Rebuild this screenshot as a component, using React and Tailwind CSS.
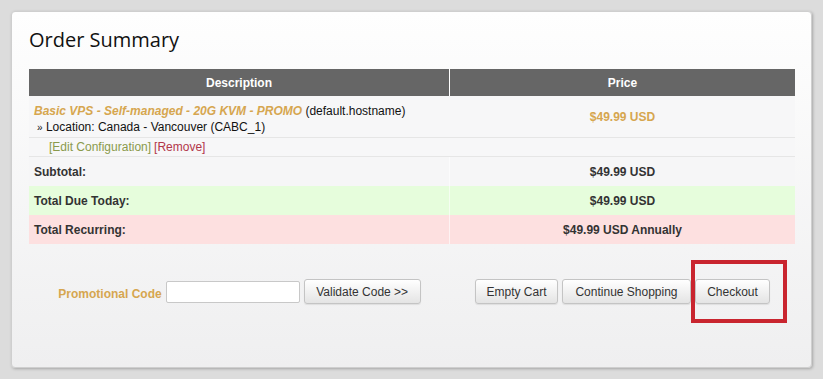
import React from "react";

const btn =
  "h-[25px] px-[8px] whitespace-nowrap rounded-[3px] border border-[#c4c4c4] bg-gradient-to-b from-white to-[#e4e4e4] text-[12px] text-[#333] shadow-[0_1px_1px_rgba(0,0,0,0.08)]";

const totals = [
  { label: "Subtotal:", value: "$49.99 USD", bg: "bg-[#f6f6f7]" },
  { label: "Total Due Today:", value: "$49.99 USD", bg: "bg-[#e6fddc]" },
  { label: "Total Recurring:", value: "$49.99 USD Annually", bg: "bg-[#fde0e0]" },
];

export default function App() {
  return (
    <div className="w-[823px] h-[379px] bg-[#dcdcdc] pt-[11px] pl-[11px] font-['Liberation_Sans',Arial,sans-serif]">
      <div className="relative w-[801px] h-[357px] rounded-[4px] border border-[#cfcfcf] bg-gradient-to-b from-[#fefefe] to-[#efeff0] shadow-[1px_1px_3px_rgba(0,0,0,0.25)] px-[17px] pt-[14px]">
        <h1 className="text-[20px] leading-[28px] text-[#111] font-['Open_Sans',sans-serif]">
          Order Summary
        </h1>

        <div className="mt-[15px] w-[766px] bg-[#f7f7f8]">
          <div className="grid grid-cols-[421px_345px] h-[27px] bg-[#666] text-white text-[12px] font-bold">
            <div className="flex items-center justify-center border-r border-white">Description</div>
            <div className="flex items-center justify-center">Price</div>
          </div>

          <div className="grid grid-cols-[421px_345px] h-[42px] border-b border-[#e6e6e6]">
            <div className="pl-[5px] pt-[7px] text-[12px] leading-[16px] text-[#111]">
              <div>
                <span className="italic font-bold text-[#d6a64f]">
                  Basic VPS - Self-managed - 20G KVM - PROMO
                </span>{" "}
                (default.hostname)
              </div>
              <div className="pl-[3px]">
                <span className="text-[10px]">»</span> Location: Canada - Vancouver (CABC_1)
              </div>
            </div>
            <div className="flex items-center justify-center text-[12px] font-bold text-[#d6a64f]">
              $49.99 USD
            </div>
          </div>

          <div className="h-[19px] border-b border-[#e6e6e6] pl-[20px] flex items-center text-[12px]">
            <span className="text-[#8a9a4c]">[Edit Configuration]</span>
            <span className="ml-[3px] text-[#b2364a]">[Remove]</span>
          </div>

          {totals.map((row) => (
            <div
              key={row.label}
              className={`grid grid-cols-[421px_345px] h-[29px] text-[12px] font-bold text-[#333] ${row.bg}`}
            >
              <div className="flex items-center pl-[5px] border-r border-white/60">{row.label}</div>
              <div className="flex items-center justify-center">{row.value}</div>
            </div>
          ))}
        </div>

        <div className="grid grid-cols-[421px_345px] mt-[35px]">
          <div className="flex items-center justify-center">
            <span className="text-[12px] font-bold text-[#d6a64f] mr-[4px] mt-[4px]">Promotional Code</span>
            <input
              className="w-[134px] h-[22px] border border-[#c8c8c8] bg-white rounded-[2px] outline-none"
              type="text"
            />
            <button className={`${btn} ml-[4px] w-[117px]`}>Validate Code &gt;&gt;</button>
          </div>
          <div className="flex items-center justify-center gap-[4px]">
            <button className={`${btn} w-[83px]`}>Empty Cart</button>
            <button className={`${btn} w-[129px]`}>Continue Shopping</button>
            <button className={`${btn} w-[75px]`}>Checkout</button>
          </div>
        </div>

        <div className="absolute left-[679px] top-[248px] w-[96px] h-[63px] border-[4px] border-[#c9252f]" />
      </div>
    </div>
  );
}
